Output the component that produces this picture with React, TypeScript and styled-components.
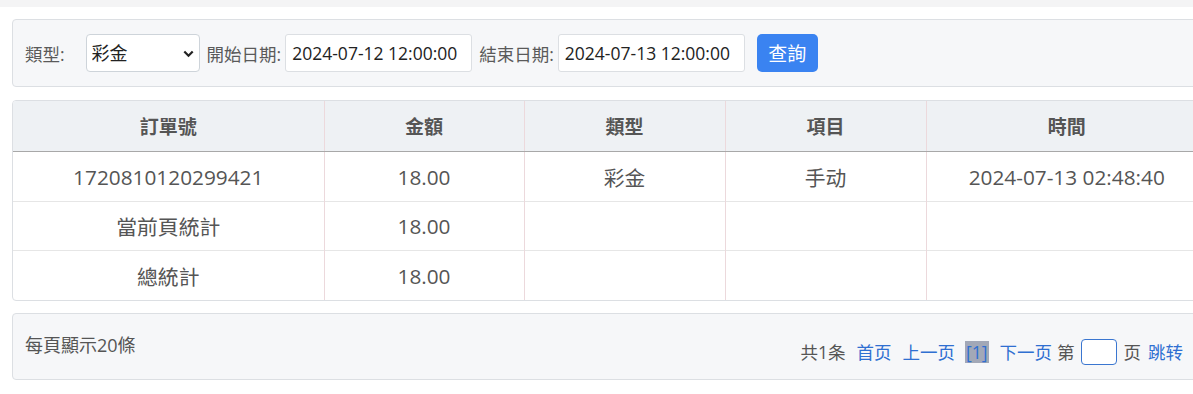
import { createGlobalStyle } from 'styled-components'
import styled from 'styled-components'

const GlobalStyle = createGlobalStyle`
  html, body {
    margin: 0;
    padding: 0;
    overflow: hidden;
    background: #fff;
  }
  body {
    font-family: "Open Sans", "Noto Sans CJK TC", "Noto Sans CJK SC", sans-serif;
    color: #555;
  }
`

const rows = [
  { order: '1720810120299421', amount: '18.00', kind: '彩金', item: '手动', time: '2024-07-13 02:48:40' },
  { order: '當前頁統計', amount: '18.00', kind: '', item: '', time: '' },
  { order: '總統計', amount: '18.00', kind: '', item: '', time: '' },
]

const columns = [
  { title: '訂單號', width: 311 },
  { title: '金額', width: 200 },
  { title: '類型', width: 201 },
  { title: '項目', width: 201 },
  { title: '時間', width: 281 },
]

export default function App() {
  return (
    <>
      <GlobalStyle />
      <TopStrip />
      <Page>
        <FilterPanel>
          <Label>類型:</Label>
          <SelectWrap>
            <Select defaultValue='彩金'>
              <option>彩金</option>
            </Select>
            <Chevron width='11' height='8' viewBox='0 0 11 8'>
              <path d='M1.3 1.5 L5.5 5.7 L9.7 1.5' fill='none' stroke='#222' strokeWidth='2.2' />
            </Chevron>
          </SelectWrap>
          <Label $tight>開始日期:</Label>
          <DateInput defaultValue='2024-07-12 12:00:00' />
          <Label $tight>結束日期:</Label>
          <DateInput defaultValue='2024-07-13 12:00:00' />
          <SearchButton>查詢</SearchButton>
        </FilterPanel>

        <TableBox>
          <Table>
            <colgroup>
              {columns.map((c) => (
                <col key={c.title} style={{ width: c.width }} />
              ))}
            </colgroup>
            <thead>
              <tr>
                {columns.map((c) => (
                  <Th key={c.title}>{c.title}</Th>
                ))}
              </tr>
            </thead>
            <tbody>
              {rows.map((r, i) => (
                <tr key={i}>
                  <Td>{r.order}</Td>
                  <Td>{r.amount}</Td>
                  <Td>{r.kind}</Td>
                  <Td>{r.item}</Td>
                  <Td>{r.time}</Td>
                </tr>
              ))}
            </tbody>
          </Table>
        </TableBox>

        <PagerPanel>
          <PageSize>每頁顯示20條</PageSize>
          <Pager>
            <PlainText $gap={11}>共1条</PlainText>
            <PageLink $gap={11}>首页</PageLink>
            <PageLink $gap={10}>上一页</PageLink>
            <CurrentPage>[1]</CurrentPage>
            <PageLink $gap={5}>下一页</PageLink>
            <PlainText $gap={6}>第</PlainText>
            <JumpInput />
            <PlainText $gap={7}>页</PlainText>
            <PageLink $gap={0}>跳转</PageLink>
          </Pager>
        </PagerPanel>
      </Page>
    </>
  )
}

const TopStrip = styled.div`
  height: 7px;
  background: #f4f4f5;
`

const Page = styled.div`
  width: 1194px;
  margin: 12px 0 0 12px;
  display: flex;
  flex-direction: column;
  gap: 13px;
`

const FilterPanel = styled.div`
  height: 66px;
  box-sizing: content-box;
  display: flex;
  align-items: center;
  padding: 0 12px;
  background: #f6f7f9;
  border: 1px solid #dcdfe3;
  border-radius: 4px;
`

const Label = styled.span<{ $tight?: boolean }>`
  font-size: 17.5px;
  color: #5a5a5a;
  margin: ${({ $tight }) => ($tight ? '0 4px 0 7px' : '0 21px 0 0')};
  white-space: nowrap;
`

const SelectWrap = styled.div`
  position: relative;
  width: 114px;
  height: 38px;
`

const Select = styled.select`
  appearance: none;
  width: 100%;
  height: 100%;
  box-sizing: border-box;
  padding: 0 24px 0 5px;
  font-family: inherit;
  font-size: 18px;
  color: #222;
  background: #fff;
  border: 1px solid #ced4da;
  border-radius: 4px;
  outline: none;
`

const Chevron = styled.svg`
  position: absolute;
  right: 6px;
  top: 16px;
  pointer-events: none;
`

const DateInput = styled.input`
  width: 187px;
  height: 38px;
  box-sizing: border-box;
  padding: 0 6px;
  font-family: inherit;
  font-size: 17.5px;
  color: #222;
  background: #fff;
  border: 1px solid #dcdfe3;
  border-radius: 3px;
  outline: none;
`

const SearchButton = styled.button`
  margin-left: 12px;
  width: 61px;
  height: 38px;
  border: none;
  border-radius: 5px;
  background: #3a83f1;
  color: #fff;
  font-family: inherit;
  font-size: 19px;
  padding: 0;
`

const TableBox = styled.div`
  border: 1px solid #dcdfe3;
  border-radius: 4px;
  overflow: hidden;
`

const Table = styled.table`
  width: 100%;
  table-layout: fixed;
  border-collapse: collapse;
`

const Th = styled.th`
  height: 50px;
  padding: 0;
  background: #eef1f4;
  border-bottom: 1px solid #a8a8a8;
  border-left: 1px solid #ecd9dc;
  font-size: 19px;
  font-weight: 700;
  color: #555;
  text-align: center;
  &:first-child {
    border-left: none;
  }
`

const Td = styled.td`
  height: 48px;
  padding: 0;
  border-top: 1px solid #e6e6e6;
  border-left: 1px solid #ecd9dc;
  font-size: 20.8px;
  color: #555;
  text-align: center;
  tr:first-child > &,
  tr:last-child > & {
    height: 49px;
  }
  tr:first-child > & {
    border-top: none;
  }
  &:first-child {
    border-left: none;
  }
`

const PagerPanel = styled.div`
  height: 65px;
  box-sizing: content-box;
  margin-top: -1px;
  display: flex;
  justify-content: space-between;
  align-items: flex-start;
  padding: 0 22px 0 12px;
  background: #f6f7f9;
  border: 1px solid #dcdfe3;
  border-radius: 4px;
`

const PageSize = styled.div`
  margin-top: 18px;
  font-size: 18px;
  line-height: 26px;
  color: #555;
`

const Pager = styled.div`
  margin-top: 25px;
  display: flex;
  align-items: center;
  font-size: 17.5px;
  line-height: 26px;
`

const PlainText = styled.span<{ $gap: number }>`
  color: #555;
  margin-right: ${({ $gap }) => $gap}px;
`

const PageLink = styled.a<{ $gap: number }>`
  color: #2f6fd1;
  margin-right: ${({ $gap }) => $gap}px;
  cursor: pointer;
`

const CurrentPage = styled.span`
  color: #2f6fd1;
  background: #a2a8b7;
  line-height: 22px;
  padding: 0 1px;
  margin-right: 11px;
`

const JumpInput = styled.input`
  width: 36px;
  height: 26px;
  box-sizing: border-box;
  margin-right: 7px;
  border: 1px solid #3a76d0;
  border-radius: 4px;
  background: #fff;
  outline: none;
`
